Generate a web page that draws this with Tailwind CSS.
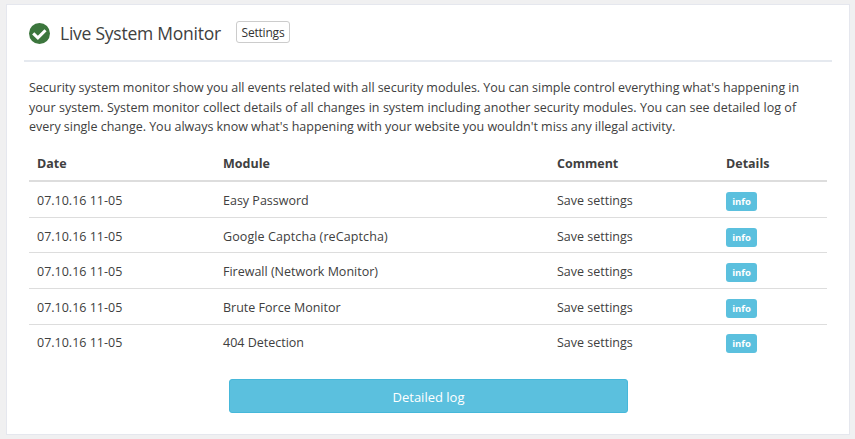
<!DOCTYPE html>
<html lang="en">
<head>
<meta charset="utf-8">
<title>Live System Monitor</title>
<script src="https://cdn.jsdelivr.net/npm/@tailwindcss/browser@4"></script>
</head>
<body class="h-[439px] overflow-hidden bg-[#f0f0f1] pl-1.5 pt-1 font-['Open_Sans','Noto_Sans',sans-serif] text-[12.5px] text-[#404040]">
<main class="h-[431px] w-[844px] border border-[#e5e7ee] bg-white px-[17px]">
  <header class="flex h-[57px] items-center border-b-2 border-[#e5e9ef] pl-[5px]">
    <svg class="mt-px size-[21px] shrink-0" viewBox="0 0 22 22"><circle cx="11" cy="11" r="11" fill="#3c763d"/><path d="M4.4 10.8 9.3 15.5 17.3 7.6" fill="none" stroke="#fff" stroke-width="3.2"/></svg>
    <h1 class="ml-[10px] w-[176px] whitespace-nowrap text-[17.5px] leading-6 tracking-[-0.24px]">Live System Monitor</h1>
    <button class="mb-0.5 flex h-[22px] w-[54px] items-center justify-center rounded-[3px] border border-[#ccc] pt-0.5 text-[12px] tracking-[-0.2px] text-[#333]">Settings</button>
  </header>
  <section class="px-[5px] pt-[16px]">
    <p class="h-[58px] whitespace-nowrap leading-[19.5px]"><span class="[word-spacing:-0.2px]">Security system monitor show you all events related with all security modules. You can simple control everything what's happening in</span><br><span class="[word-spacing:0.18px]">your system. System monitor collect details of all changes in system including another security modules. You can see detailed log of</span><br><span class="[word-spacing:-0.12px]">every single change. You always know what's happening with your website you wouldn't miss any illegal activity.</span></p>
    <table class="mt-[10px] w-[798px] table-fixed border-separate border-spacing-0 text-left leading-[19px] [&_td]:border-[#ddd] [&_td]:px-2 [&_td]:pt-[9px] [&_td]:align-top [&_th]:border-b-2 [&_th]:border-[#ddd] [&_th]:px-2">
      <colgroup><col class="w-[186px]"><col class="w-[334px]"><col class="w-[169px]"><col></colgroup>
      <thead><tr class="h-[36px]"><th>Date</th><th>Module</th><th>Comment</th><th>Details</th></tr></thead>
      <tbody>
        <tr class="h-[36px] [&>td]:border-b"><td>07.10.16 11-05</td><td>Easy Password</td><td>Save settings</td><td><span class="mt-px flex h-[19px] w-[31px] items-center justify-center rounded-[3px] bg-[#5bc0de] text-[9.5px] font-bold text-white">info</span></td></tr>
        <tr class="h-[35px] [&>td]:border-b"><td>07.10.16 11-05</td><td><span class="tracking-[0.1px]">Google Captcha (reCaptcha)</span></td><td>Save settings</td><td><span class="mt-px flex h-[19px] w-[31px] items-center justify-center rounded-[3px] bg-[#5bc0de] text-[9.5px] font-bold text-white">info</span></td></tr>
        <tr class="h-[36px] [&>td]:border-b"><td>07.10.16 11-05</td><td>Firewall (Network Monitor)</td><td>Save settings</td><td><span class="mt-px flex h-[19px] w-[31px] items-center justify-center rounded-[3px] bg-[#5bc0de] text-[9.5px] font-bold text-white">info</span></td></tr>
        <tr class="h-[36px] [&>td]:border-b"><td>07.10.16 11-05</td><td>Brute Force Monitor</td><td>Save settings</td><td><span class="mt-px flex h-[19px] w-[31px] items-center justify-center rounded-[3px] bg-[#5bc0de] text-[9.5px] font-bold text-white">info</span></td></tr>
        <tr class="h-[35px] [&>td]:pt-2!"><td>07.10.16 11-05</td><td>404 Detection</td><td>Save settings</td><td><span class="mt-px flex h-[19px] w-[31px] items-center justify-center rounded-[3px] bg-[#5bc0de] text-[9.5px] font-bold text-white">info</span></td></tr>
      </tbody>
    </table>
    <button class="ml-[200px] mt-[19px] flex h-[34px] w-[399px] items-center justify-center rounded-[3px] border border-[#46b8da] bg-[#5bc0de] pt-[3px] text-[13px] text-white">Detailed log</button>
  </section>
</main>
</body>
</html>
